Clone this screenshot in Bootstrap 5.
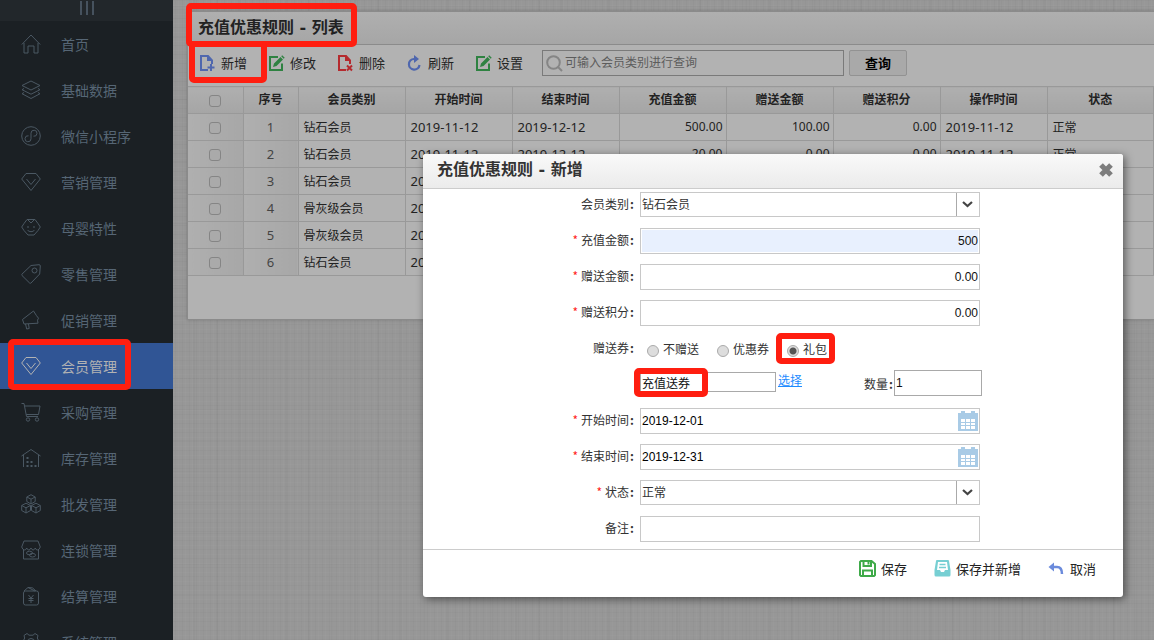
<!DOCTYPE html>
<html lang="zh-CN">
<head>
<meta charset="utf-8">
<meta name="viewport" content="width=device-width, initial-scale=1">
<title>充值优惠规则</title>
<link rel="stylesheet" href="https://cdn.jsdelivr.net/npm/bootstrap@5.3.0/dist/css/bootstrap.min.css">
<style>
  body {
    font-family: "Noto Sans", "Noto Sans CJK SC", sans-serif;
    font-size: 12px; line-height: 18px; color: #222;
    background-color: #979797;
    background-image:
      repeating-linear-gradient(90deg, rgba(0,0,0,.02) 0 1px, transparent 1px 3px, rgba(255,255,255,.02) 3px 4px, transparent 4px 7px),
      repeating-linear-gradient(90deg, transparent 0 9px, rgba(0,0,0,.02) 9px 11px, transparent 11px 23px),
      repeating-linear-gradient(0deg, rgba(0,0,0,.02) 0 1px, transparent 1px 4px, rgba(255,255,255,.02) 4px 5px, transparent 5px 9px),
      repeating-linear-gradient(0deg, transparent 0 13px, rgba(0,0,0,.02) 13px 14px, transparent 14px 31px);
  }
  svg { display: block; flex: none; }
  .stroke-icon { fill: none; stroke: currentColor; stroke-width: 1; stroke-linejoin: round; }

  .side { width: 173px; flex: none; background: #1b2024; }
  .side-toggle { height: 21px; background: #22272b; color: #46525e; border: 0; width: 100%; }
  .side .nav-link {
    height: 46px; padding: 0 21px; gap: 20px; border-radius: 0;
    font-family: "Noto Sans CJK SC", sans-serif; font-size: 14px; color: #566675; white-space: nowrap;
  }
  .side .nav-link svg { color: #4b5863; }
  .side .nav-link.active, .side .nav-link.active svg { color: #b3b3b3; }
  .side .nav-link.active { background: #305595; }

  .panel { margin: 11px 0 0 14px; background: #b2b2b2; border: 1px solid #8b8b8b; border-right: 0; box-shadow: 0 0 3px rgba(0,0,0,.2); }
  .panel-top { height: 33px; padding-left: 10px; border-bottom: 1px solid #8b8b8b; background: linear-gradient(#afafaf, #a6a6a6); }
  .heading { font-family: "DejaVu Sans", "Noto Sans CJK SC", sans-serif; font-size: 16px; line-height: 24px; font-weight: 700; margin: 0; }
  .tools { height: 41px; padding: 0 12px 5px 11px; gap: 21px; }
  .tool { border: 0; background: none; padding: 0; gap: 5px; font-family: "Noto Sans CJK SC", sans-serif; font-size: 13px; line-height: 20px; color: #222; }
  .search { width: 302px; height: 26px; border: 1px solid #7a7a7a; padding-left: 3px; margin-left: -2px; }
  .search input { border: 0; background: none; outline: 0; font-size: 12px; padding: 0 2px; min-width: 0; }
  .search input::placeholder { color: #5c5c5c; opacity: 1; }
  .query { width: 58px; height: 26px; margin-left: -16px; border: 1px solid #929292; border-radius: 2px; background: #a9a9a9; font-size: 13px; font-weight: 700; color: #000; padding: 0; }

  .grid { table-layout: fixed; width: 100%; min-width: 966px; border-collapse: collapse; border-top: 1px solid #8b8b8b; border-bottom: 1px solid #8b8b8b; margin-bottom: 43px; }
  .grid th, .grid td { height: 27px; padding: 0 5px; border: 1px solid #999; border-left: 0; white-space: nowrap; }
  .grid td:not([class]) { padding-top: 2px; }
  .grid th { text-align: center; background: linear-gradient(#afafaf, #a5a5a5); }
  .grid .lead-cell { text-align: center; background: linear-gradient(90deg, #afafaf, #a7a7a7); color: #444; font-size: 13px; }
  .grid .date { font-size: 13px; }
  .grid .num { text-align: right; padding-right: 3px; }
  .tick { appearance: none; width: 12px; height: 12px; border: 1px solid #858585; border-radius: 3px; background: #aaa; display: block; margin: 2px auto 0; }

  /* dialog */
  .layer { inset: 0; padding: 154px 31px 0 0; }
  .dialog { width: 700px; background: #fff; border-radius: 3px; box-shadow: 2px 2px 8px rgba(0,0,0,.5); }
  .dialog-top { height: 35px; padding: 0 9px 2px 14px; border-bottom: 1px solid #ccc; background: linear-gradient(#f9f9f9, #ebebeb); border-radius: 3px 3px 0 0; }
  .dialog-top .heading { color: #333; }
  .shut { border: 0; background: none; padding: 0; color: #7d7d7d; }
  .fields { display: grid; gap: 10px; padding: 3px 0 7px; }
  .line { display: grid; grid-template-columns: 211px 340px; column-gap: 6px; height: 26px; }
  .line-split { grid-template-columns: 211px 342px; }
  .cap { text-align: right; line-height: 24px; font-family: "Noto Sans CJK SC", sans-serif; color: #333; }
  .req::before { content: "*"; color: #f22; margin-right: 3px; }
  .cap::after { content: ":"; font-weight: 700; margin-left: 1px; }
  .box { border: 1px solid #c8c8c8; border-radius: 0; background-color: #fff; padding: 0 1px; height: 26px; width: 100%; color: #111; font-family: "Liberation Sans", "Noto Sans CJK SC", sans-serif; font-size: 12px; line-height: 18px; min-width: 0; }
  select.box {
    appearance: none; height: 25px; color: #333;
    background: #fff url("data:image/svg+xml,%3Csvg xmlns='http://www.w3.org/2000/svg' width='23' height='23'%3E%3Cpath d='M.5 0v23' stroke='%23aaa'/%3E%3Cpath d='M7 9l4.500 4L16 9' fill='none' stroke='%23444' stroke-width='2.200'/%3E%3C/svg%3E") no-repeat right center;
  }
  .amount { text-align: right; padding-bottom: 1px; }
  .filled { background-color: #e8f0fe; box-shadow: inset 0 0 0 1px #fff; }
  .dark { border-color: #a9a9a9; }
  .day { padding: 0 1px 0 0; }
  .day input { border: 0; outline: 0; padding: 0 1px; min-width: 0; }
  .day button { border: 0; padding: 0; background: none; }
  .opt { gap: 4px; height: 26px; color: #333; font-family: "Noto Sans CJK SC", sans-serif; }
  .opt input { appearance: none; width: 12px; height: 12px; margin: 4px 0 0; border: 1px solid #aaa; border-radius: 50%; background: #ddd; }
  .opt input:checked { background: radial-gradient(circle, #555 0 3px, #ddd 4px); }
  .opts { gap: 18px; padding-left: 7px; }
  .gift { width: 136px; height: 20px; }
  .count { width: 88px; flex: none; margin: -2px 0 0 1px; }
  .pick { color: #1e8cff; padding-left: 2px; }
  .dialog-end { height: 48px; padding: 0 27px 10px 0; border-top: 1px solid #ccc; gap: 27px; }

  /* highlight frames */
  .hot { position: relative; }
  .hot::after { content: ""; position: absolute; inset: var(--gap); border: 6px solid #ff1e10; border-radius: 5px; pointer-events: none; }
  .hot-menu { --gap: -4px 42px -1px 8px; }
  .hot-title { --gap: -13px -13px -7px -12px; }
  .hot-new { --gap: -12px -20px -10px -10px; z-index: 1; }
  .hot-opt { --gap: -3px -8px -2px -11px; }
  .hot-gift { --gap: -4px 68px -5px -6px; }
</style>
</head>
<body class="vh-100 overflow-hidden">
<svg width="0" height="0" class="position-absolute">
  <defs>
    <symbol id="gem" viewBox="0 0 20 20"><path d="M5 1.500h10L19.300 7 10 18.500.700 7zM5.500 7l4.500 5.500L14.500 7"/></symbol>
    <symbol id="edit" viewBox="0 0 17 17"><path d="M10 2H2v13h12V8.500" fill="none" stroke="#2e8241" stroke-width="2"/><path d="M5 12l1-3.500L12.500 2 15 4.500 8.500 11zM13.200 1.300l1-1 2.500 2.500-1 1z" fill="#2e8241"/></symbol>
    <symbol id="cal" viewBox="0 0 20 20"><path d="M0 2h3V0h4v2h6V0h4v2h3v18H0z" fill="#a9cbe6"/><path d="M3 8h4v3H3zm5 0h4v3H8zm5 0h4v3h-4zM3 12h4v2H3zm5 0h4v2H8zm5 0h4v2h-4zM3 15h4v3H3zm5 0h4v3H8zm5 0h4v3h-4z" fill="#fff"/></symbol>
  </defs>
</svg>

<div class="d-flex vh-100">
  <aside class="side vh-100 overflow-hidden">
    <button class="side-toggle d-flex justify-content-center p-0" aria-label="菜单"><svg width="14" height="16" viewBox="0 0 14 16"><path d="M1 1v14M7 1v14M13 1v14" stroke="currentColor" stroke-width="2"/></svg></button>
    <nav class="nav nav-pills flex-column flex-nowrap">
      <a class="nav-link d-flex align-items-center" href="#"><svg class="stroke-icon" width="20" height="20" viewBox="0 0 20 20"><path d="M.800 10.500L10 1l9.200 9.500M3 9v10h4v-7h6v7h4V9"/></svg>首页</a>
      <a class="nav-link d-flex align-items-center" href="#"><svg class="stroke-icon" width="20" height="20" viewBox="0 0 20 20"><path d="M10 1l9 4.500-9 4.500-9-4.500zM3 8.500L1 9.700l9 4.500 9-4.500-2-1.200M3 12.500l-2 1.200 9 4.800 9-4.800-2-1.200"/></svg>基础数据</a>
      <a class="nav-link d-flex align-items-center" href="#"><svg class="stroke-icon" width="20" height="20" viewBox="0 0 20 20"><circle cx="10" cy="10" r="9.300"/><path d="M7.500 9.800a3 3 0 1 0 2.500 3V7.200a3 3 0 1 1 2.500 3"/></svg>微信小程序</a>
      <a class="nav-link d-flex align-items-center" href="#"><svg class="stroke-icon" width="20" height="20"><use href="#gem"/></svg>营销管理</a>
      <a class="nav-link d-flex align-items-center" href="#"><svg class="stroke-icon" width="20" height="20" viewBox="0 0 20 20"><path d="M6 1.500h8l3 4 2.300 3.500-2.300 3.500-4 4.500H7l-4-4.500L.700 9 3 5.500zM7 2l3 3 3-3M7 8v2M13 8v2M6.500 12c1.500 2.200 5.500 2.200 7 0"/></svg>母婴特性</a>
      <a class="nav-link d-flex align-items-center" href="#"><svg class="stroke-icon" width="20" height="20" viewBox="0 0 20 20"><path d="M10 1.500L18 .700q1.300 0 1.300 1.300l-.600 8L10 19q-.700.600-1.400 0L1 11.500q-.600-.700 0-1.400z"/><circle cx="13.500" cy="6.500" r="2.500"/></svg>零售管理</a>
      <a class="nav-link d-flex align-items-center" href="#"><svg class="stroke-icon" width="20" height="20" viewBox="0 0 20 20"><path d="M12.500 1L1.500 9.500 3 14l14-.800-.500-3 1-2-2-2.500zM4.500 14l1.200 5 2.500-.500L7.500 14"/></svg>促销管理</a>
      <a class="nav-link active d-flex align-items-center hot hot-menu" href="#" aria-current="page"><svg class="stroke-icon" width="20" height="20"><use href="#gem"/></svg>会员管理</a>
      <a class="nav-link d-flex align-items-center" href="#"><svg class="stroke-icon" width="20" height="20" viewBox="0 0 20 20"><path d="M.500 1.500H3l2.500 13H17M4 4h15l-1.500 8.500H5.200"/><circle cx="7" cy="17.500" r="1.700"/><circle cx="16" cy="17.500" r="1.700"/></svg>采购管理</a>
      <a class="nav-link d-flex align-items-center" href="#"><svg class="stroke-icon" width="20" height="20" viewBox="0 0 20 20"><path d="M.500 8L10 1.500 19.500 8M2.500 7v12M17.500 7v12"/><path d="M5.500 10h2m-2 4h2m2 0h2m-6 4h2m2 0h2m2 0h2" stroke-width="2"/></svg>库存管理</a>
      <a class="nav-link d-flex align-items-center" href="#"><svg class="stroke-icon" width="20" height="20" viewBox="0 0 20 20"><path d="M10 .700l4.200 2.300v4.500L10 10 5.800 7.500V3zM5.800 3L10 5.200 14.200 3M10 5.200V10M5 9.200l4.500 2.300V16.500L5 19 .700 16.500v-5zM.700 11.500L5 13.800l4.500-2.300M5 13.800V19M15 9.200l4.300 2.300v5L15 19l-4.500-2.500v-5zM10.500 11.500l4.500 2.300 4.300-2.300M15 13.800V19"/></svg>批发管理</a>
      <a class="nav-link d-flex align-items-center" href="#"><svg class="stroke-icon" width="20" height="20" viewBox="0 0 20 20"><path d="M3 1h14l2.300 6q-1 3-3 3-1.500 0-2-2-1 2-2.200 2T10 8q-1 2-2.200 2T5.700 8q-.700 2-2 2-2 0-3-3zM2.500 10v9h15v-9"/><ellipse cx="8.500" cy="13" rx="3" ry="1.800"/><ellipse cx="11.500" cy="15.200" rx="3" ry="1.800"/></svg>连锁管理</a>
      <a class="nav-link d-flex align-items-center" href="#"><svg class="stroke-icon" width="20" height="20" viewBox="0 0 20 20"><rect x="2.500" y="5" width="15" height="14" rx="2"/><path d="M3 5l4-3.500q5-1 8 3.500M7 1.500L10 3l4 2M7.500 9l2.500 3L12.500 9M10 12v5M7.500 12.500h5M7.500 14.500h5"/></svg>结算管理</a>
      <a class="nav-link d-flex align-items-center" href="#"><svg class="stroke-icon" width="20" height="20" viewBox="0 0 20 20"><path d="M6 1.500l2 1.700h4l2-1.700 3 2-.700 2.500L18 9.500l1.500 1L18 14l-3 4.500H5L2 14 .500 10.500 2 9.500 3.700 6 3 3.500z"/><circle cx="10" cy="10" r="3.500"/></svg>系统管理</a>
    </nav>
  </aside>

  <main class="flex-grow-1 overflow-hidden">
    <section class="panel">
      <header class="panel-top d-flex align-items-center"><h1 class="heading hot hot-title">充值优惠规则 - 列表</h1></header>
      <div class="tools d-flex align-items-center">
        <button class="tool d-flex align-items-center hot hot-new"><svg width="17" height="17" viewBox="0 0 17 17"><path d="M9 15H2V1h7l4 4.500V9" fill="none" stroke="#4f67ae" stroke-width="2"/><path d="M8 0l6 6H8zM11 9h2v2.500h2.500v2H13V16h-2v-2.500H8.500v-2H11z" fill="#4f67ae"/></svg>新增</button>
        <button class="tool d-flex align-items-center"><svg width="17" height="17"><use href="#edit"/></svg>修改</button>
        <button class="tool d-flex align-items-center"><svg width="17" height="17" viewBox="0 0 17 17"><path d="M9 15H2V1h7l4 4.500V9" fill="none" stroke="#b52a2e" stroke-width="2"/><path d="M8 0l6 6H8z" fill="#b52a2e"/><path d="M10 10.500l5 5m0-5l-5 5" stroke="#b52a2e" stroke-width="2"/></svg>删除</button>
        <button class="tool d-flex align-items-center"><svg width="17" height="17" viewBox="0 0 17 17"><path d="M10 4H8a5.300 5.300 0 1 0 5.500 6" fill="none" stroke="#4f67ae" stroke-width="2.200"/><path d="M8 0l5 4-5 4z" fill="#4f67ae"/></svg>刷新</button>
        <button class="tool d-flex align-items-center"><svg width="17" height="17"><use href="#edit"/></svg>设置</button>
        <div class="search d-flex align-items-center"><svg width="17" height="17" viewBox="0 0 17 17"><circle cx="7.500" cy="7.500" r="6.300" fill="none" stroke="#858585" stroke-width="2"/><path d="M12 12l4 4" stroke="#858585" stroke-width="2"/></svg><input class="flex-grow-1" type="text" aria-label="查询条件" placeholder="可输入会员类别进行查询"></div>
        <button class="query">查询</button>
      </div>
      <table class="grid">
        <colgroup><col style="width:55px"><col style="width:55px"><col style="width:107px"><col style="width:107px"><col style="width:107px"><col style="width:107px"><col style="width:107px"><col style="width:107px"><col style="width:107px"><col></colgroup>
        <thead><tr><th><input class="tick" type="checkbox" aria-label="全选"></th><th>序号</th><th>会员类别</th><th>开始时间</th><th>结束时间</th><th>充值金额</th><th>赠送金额</th><th>赠送积分</th><th>操作时间</th><th>状态</th></tr></thead>
        <tbody>
          <tr><td class="lead-cell"><input class="tick" type="checkbox" aria-label="选择 1"></td><td class="lead-cell">1</td><td>钻石会员</td><td class="date">2019-11-12</td><td class="date">2019-12-12</td><td class="num">500.00</td><td class="num">100.00</td><td class="num">0.00</td><td class="date">2019-11-12</td><td>正常</td></tr>
          <tr><td class="lead-cell"><input class="tick" type="checkbox" aria-label="选择 2"></td><td class="lead-cell">2</td><td>钻石会员</td><td class="date">2019-11-12</td><td class="date">2019-12-12</td><td class="num">20.00</td><td class="num">0.00</td><td class="num">0.00</td><td class="date">2019-11-12</td><td>正常</td></tr>
          <tr><td class="lead-cell"><input class="tick" type="checkbox" aria-label="选择 3"></td><td class="lead-cell">3</td><td>钻石会员</td><td class="date">20</td><td></td><td></td><td></td><td></td><td></td><td></td></tr>
          <tr><td class="lead-cell"><input class="tick" type="checkbox" aria-label="选择 4"></td><td class="lead-cell">4</td><td>骨灰级会员</td><td class="date">20</td><td></td><td></td><td></td><td></td><td></td><td></td></tr>
          <tr><td class="lead-cell"><input class="tick" type="checkbox" aria-label="选择 5"></td><td class="lead-cell">5</td><td>骨灰级会员</td><td class="date">20</td><td></td><td></td><td></td><td></td><td></td><td></td></tr>
          <tr><td class="lead-cell"><input class="tick" type="checkbox" aria-label="选择 6"></td><td class="lead-cell">6</td><td>钻石会员</td><td class="date">20</td><td></td><td></td><td></td><td></td><td></td><td></td></tr>
        </tbody>
      </table>
    </section>
  </main>
</div>

<div class="layer position-absolute d-flex justify-content-end align-items-start">
  <form class="dialog" role="dialog" aria-labelledby="dialog-name">
    <header class="dialog-top d-flex align-items-center justify-content-between">
      <h2 class="heading" id="dialog-name">充值优惠规则 - 新增</h2>
      <button type="button" class="shut" aria-label="关闭"><svg width="16" height="16" viewBox="0 0 16 16"><path d="M3 3l10 10M13 3L3 13" stroke="currentColor" stroke-width="5.200"/></svg></button>
    </header>
    <div class="fields">
      <div class="line"><label class="cap" for="kind">会员类别</label><select class="box" id="kind"><option>钻石会员</option></select></div>
      <div class="line"><label class="cap req" for="pay">充值金额</label><input class="box amount filled" id="pay" value="500"></div>
      <div class="line"><label class="cap req" for="bonus">赠送金额</label><input class="box amount" id="bonus" value="0.00"></div>
      <div class="line"><label class="cap req" for="points">赠送积分</label><input class="box amount" id="points" value="0.00"></div>
      <div class="line"><span class="cap">赠送券</span>
        <div class="opts d-flex">
          <label class="opt d-flex align-items-center"><input type="radio" name="coupon">不赠送</label>
          <label class="opt d-flex align-items-center"><input type="radio" name="coupon">优惠券</label>
          <label class="opt d-flex align-items-center hot hot-opt"><input type="radio" name="coupon" checked>礼包</label>
        </div>
      </div>
      <div class="line line-split"><span></span>
        <div class="d-flex">
          <span class="gift hot hot-gift"><input class="box dark h-100 d-block" aria-label="礼包" value="充值送券"></span>
          <a class="pick me-auto" href="#">选择</a>
          <label class="cap" for="count">数量</label>
          <span class="count"><input class="box dark d-block" id="count" value="1"></span>
        </div>
      </div>
      <div class="line"><label class="cap req" for="from">开始时间</label><div class="box day d-flex align-items-center"><input class="flex-grow-1" id="from" value="2019-12-01"><button type="button" aria-label="选择开始日期"><svg width="20" height="20"><use href="#cal"/></svg></button></div></div>
      <div class="line"><label class="cap req" for="until">结束时间</label><div class="box day d-flex align-items-center"><input class="flex-grow-1" id="until" value="2019-12-31"><button type="button" aria-label="选择结束日期"><svg width="20" height="20"><use href="#cal"/></svg></button></div></div>
      <div class="line"><label class="cap req" for="state">状态</label><select class="box" id="state"><option>正常</option></select></div>
      <div class="line"><label class="cap" for="memo">备注</label><input class="box" id="memo"></div>
    </div>
    <footer class="dialog-end d-flex align-items-center justify-content-end">
      <button type="button" class="tool d-flex align-items-center"><svg width="17" height="17" viewBox="0 0 17 17"><path d="M2 1h10.500L16 4v11l-1 1H2l-1-1V2zM4.500 1v5h7.500V1M4 16v-5.500h9V16M9.500 2v2.500" fill="none" stroke="#3faa49" stroke-width="2"/></svg>保存</button>
      <button type="button" class="tool d-flex align-items-center"><svg width="17" height="17" viewBox="0 0 17 17"><path d="M3 0h11q1 0 1 1l1.500 9v5q0 1.500-1.500 1.500H2Q.500 16.500.500 15v-5L2 1q0-1 1-1z" fill="#77cfd3"/><path d="M4 2h9l1 8h-3l-1 2H7l-1-2H3z" fill="#fff"/><path d="M5.500 4.500h6M5 7.500h7M3 14h11" stroke="#77cfd3" stroke-width="1.600"/></svg>保存并新增</button>
      <button type="button" class="tool d-flex align-items-center"><svg width="17" height="17" viewBox="0 0 17 17"><path d="M4 7h5q5 0 5 7" fill="none" stroke="#6b8bdc" stroke-width="2.500"/><path d="M6 2.500v9L.500 7z" fill="#6b8bdc"/></svg>取消</button>
    </footer>
  </form>
</div>
<script src="https://cdn.jsdelivr.net/npm/bootstrap@5.3.0/dist/js/bootstrap.bundle.min.js"></script>
</body>
</html>
